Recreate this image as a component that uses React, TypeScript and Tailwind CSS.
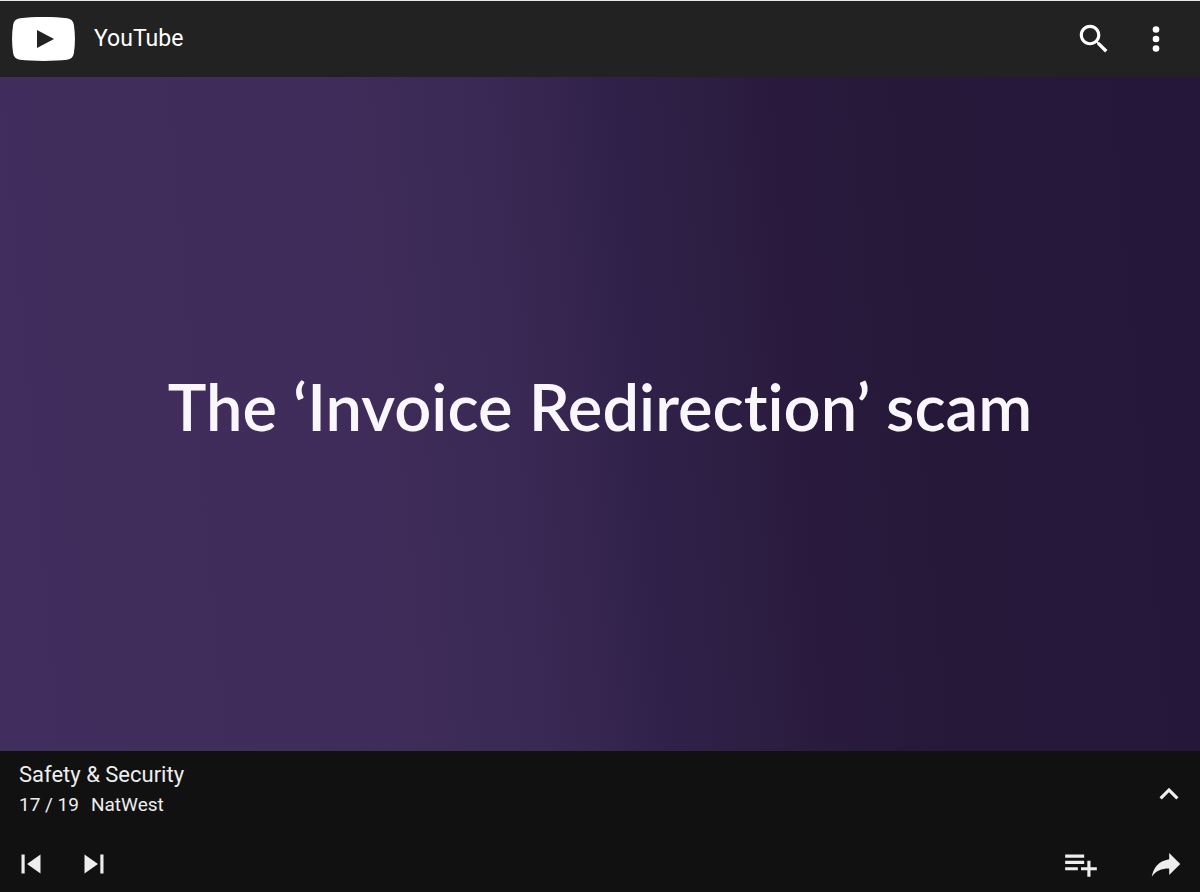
import type { ReactNode } from 'react';

interface IconButtonProps {
  label: string;
  children: ReactNode;
}

function IconButton({ label, children }: IconButtonProps) {
  return (
    <button type="button" aria-label={label} className="shrink-0 cursor-pointer">
      <svg viewBox="0 0 24 24" className="size-[38px] fill-current" aria-hidden="true">
        {children}
      </svg>
    </button>
  );
}

function Header() {
  return (
    <header className="flex h-[77px] shrink-0 items-center justify-between border-t border-[#e4eaeb] bg-[#222222] pl-3 pr-[25px] text-white">
      <a href="#" className="flex items-center gap-[19px]">
        <svg viewBox="0 0 63 44" className="h-11 w-[63px]" aria-hidden="true">
          <path
            fill="#ffffff"
            d="M8 1.2C20 -.3 43 -.3 55 1.2c4 .5 6.3 2.8 6.9 6.8 1.4 9 1.4 19 0 28-.6 4-2.9 6.3-6.9 6.8-12 1.5-35 1.5-47 0-4-.5-6.3-2.8-6.9-6.8-1.4-9-1.4-19 0-28C1.700 4 4 1.700 8 1.200Z"
          />
          <path fill="#222222" d="M25 13v18l17-9z" />
        </svg>
        <span className="text-[23px] leading-7">YouTube</span>
      </a>
      <div className="flex items-center gap-6">
        <IconButton label="Search">
          <path d="M15.5 14h-.79l-.28-.27C15.41 12.59 16 11.11 16 9.5 16 5.91 13.09 3 9.5 3S3 5.91 3 9.5 5.91 16 9.5 16c1.61 0 3.09-.59 4.23-1.57l.27.28v.79l5 4.99L20.49 19l-4.99-5zm-6 0C7.01 14 5 11.99 5 9.5S7.01 5 9.5 5 14 7.01 14 9.5 11.99 14 9.5 14z" />
        </IconButton>
        <IconButton label="More options">
          <circle cx="12" cy="6" r="2.1" />
          <circle cx="12" cy="12" r="2.1" />
          <circle cx="12" cy="18" r="2.1" />
        </IconButton>
      </div>
    </header>
  );
}

function VideoFrame() {
  return (
    <main className="flex flex-1 items-center justify-center bg-[linear-gradient(85deg,#422e5e_0%,#402c5a_30%,#3a2954_43%,#30214a_53%,#2a1b3e_65%,#261839_76%,#24173a_100%)] px-6 pb-4">
      <h1 className="text-center font-['Lato',sans-serif] text-[65px] font-semibold leading-[80px] text-[#faf7fc] [font-variant-ligatures:none]">
        The ‘Invoice Redirection’ scam
      </h1>
    </main>
  );
}

function PlaylistBar() {
  return (
    <footer className="shrink-0 bg-[#111111] pb-[9px] text-[#eeeeee]">
      <div className="flex min-h-[86px] items-center justify-between pl-[19px] pr-3">
        <div className="self-start pt-[9px]">
          <h2 className="text-[22px] leading-[30px]">Safety &amp; Security</h2>
          <p className="flex gap-3 text-[19px] leading-[30px]">
            <span>17 / 19</span>
            <span>NatWest</span>
          </p>
        </div>
        <IconButton label="Show playlist">
          <path d="M12 8l-6 6 1.41 1.41L12 10.83l4.59 4.58L18 14z" />
        </IconButton>
      </div>
      <div className="mt-2 flex items-center justify-between pl-3 pr-[15px]">
        <div className="flex gap-[25px]">
          <IconButton label="Previous video">
            <path d="M6 6h2v12H6zm3.5 6l8.5 6V6z" />
          </IconButton>
          <IconButton label="Next video">
            <path d="M6 18l8.5-6L6 6v12zM16 6v12h2V6h-2z" />
          </IconButton>
        </div>
        <div className="flex gap-[47px]">
          <IconButton label="Add to playlist">
            <path d="M14 10H2v2h12v-2zm0-4H2v2h12V6zm4 8v-4h-2v4h-4v2h4v4h2v-4h4v-2h-4zM2 16h8v-2H2v2z" />
          </IconButton>
          <IconButton label="Share">
            <path d="M14 9V5l7 7-7 7v-4.1c-5 0-8.5 1.6-11 5.1 1-5 4-10 11-11z" />
          </IconButton>
        </div>
      </div>
    </footer>
  );
}

export default function App() {
  return (
    <div className="flex min-h-screen flex-col bg-[#111111] font-['Roboto',sans-serif]">
      <Header />
      <VideoFrame />
      <PlaylistBar />
    </div>
  );
}
